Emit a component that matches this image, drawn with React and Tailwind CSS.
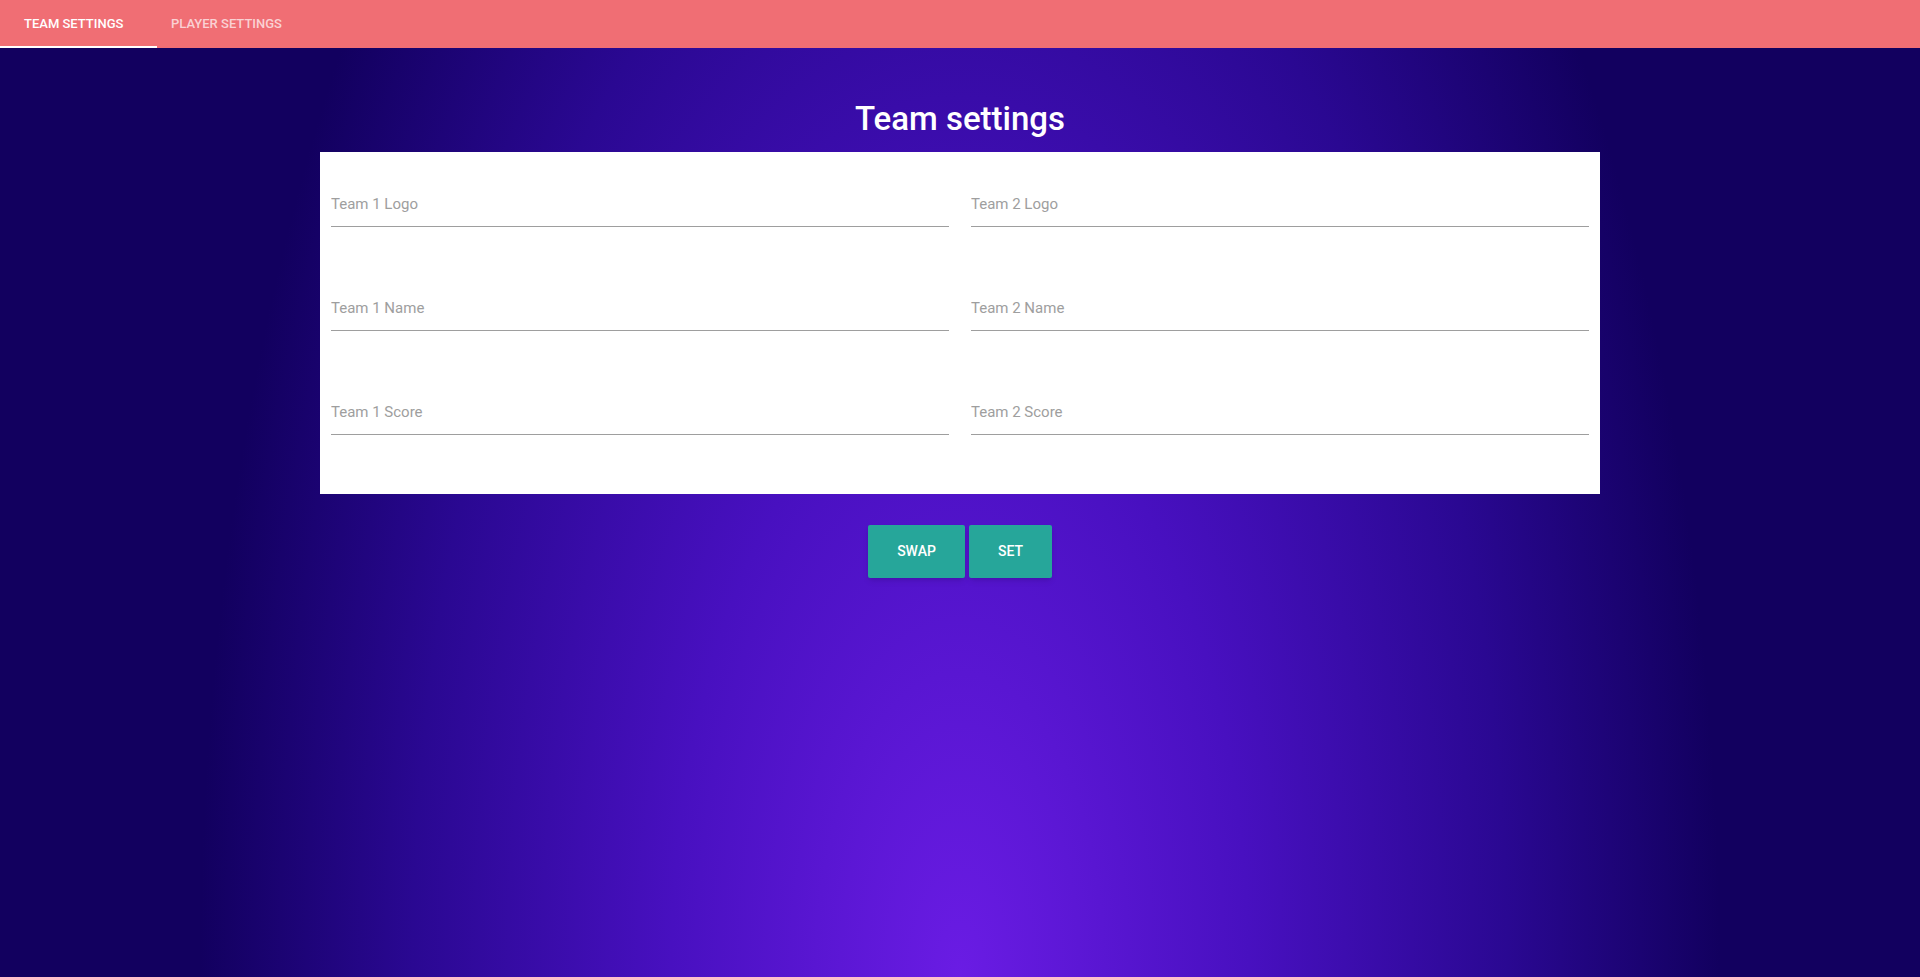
import { useState } from "react";

const fields = [
    ["Team 1 Logo", "Team 2 Logo"],
    ["Team 1 Name", "Team 2 Name"],
    ["Team 1 Score", "Team 2 Score"],
];

function Field({ label }) {
    return (
        <input
            type="text"
            placeholder={label}
            className="h-[45px] w-full border-b border-[#9e9e9e] bg-transparent text-[15px] text-gray-800 outline-none placeholder:text-[#9e9e9e]"
        />
    );
}

function App() {
    const [tab, setTab] = useState("team");

    return (
        <div
            className="min-h-screen w-full font-['Roboto',sans-serif]"
            style={{
                background:
                    "radial-gradient(ellipse 760px 1600px at 50% 100%, #6a1ce4 0%, #4810c0 38%, #2a0892 72%, #12005f 100%)",
            }}
        >
            <div className="flex h-12 items-stretch bg-[#f06e74]">
                <button
                    onClick={() => setTab("team")}
                    className={
                        "relative w-[157px] pl-6 text-left text-[13px] font-medium " +
                        (tab === "team" ? "text-white" : "text-white/70")
                    }
                >
                    TEAM SETTINGS
                    {tab === "team" && (
                        <span className="absolute bottom-0 left-0 h-[2px] w-full bg-white" />
                    )}
                </button>
                <button
                    onClick={() => setTab("player")}
                    className={
                        "relative pl-[14px] pr-6 text-left text-[13px] font-medium " +
                        (tab === "player" ? "text-white" : "text-white/70")
                    }
                >
                    PLAYER SETTINGS
                </button>
            </div>

            <h1 className="mt-[51px] mb-[13px] text-center text-[33px] leading-[40px] font-medium text-white">
                Team settings
            </h1>

            <div className="mx-auto w-[1280px] bg-white px-[11px] pt-[30px] pb-[59px]">
                <div className="grid grid-cols-2 gap-x-[22px] gap-y-[59px]">
                    {fields.map(([a, b]) => [
                        <Field key={a} label={a} />,
                        <Field key={b} label={b} />,
                    ])}
                </div>
            </div>

            <div className="mt-[31px] flex justify-center gap-1">
                <button className="h-[53px] w-[97px] rounded-[2px] bg-[#26a69a] text-[14px] font-medium text-white shadow-md">
                    SWAP
                </button>
                <button className="h-[53px] w-[83px] rounded-[2px] bg-[#26a69a] text-[14px] font-medium text-white shadow-md">
                    SET
                </button>
            </div>
        </div>
    );
}

export default App;
